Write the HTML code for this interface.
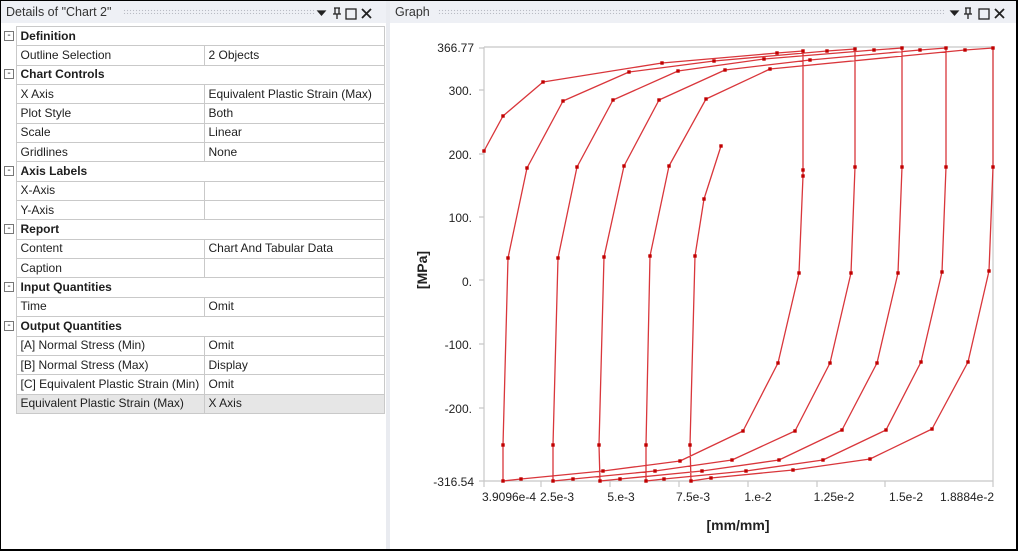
<!DOCTYPE html>
<html><head><meta charset="utf-8"><style>
*{margin:0;padding:0;box-sizing:border-box}
body{width:1018px;height:551px;background:#000;overflow:hidden;font-family:"Liberation Sans",Arial,sans-serif;font-size:12px;color:#1e1e1e;position:relative}
.wrap{position:absolute;left:1px;top:1px;width:1015px;height:548px;background:#e9ebf0}
.left{position:absolute;left:0;top:0;width:385px;height:548px;background:#fff}
.tbar{position:absolute;top:0;height:22px;background:#eef0f5;}
.tbar .t{position:absolute;left:5px;top:4px;font-size:12.5px;color:#333}
.tbar .dots{position:absolute;top:8px;height:5px;background-image:radial-gradient(#b9bcc4 0.7px,transparent 0.8px);background-size:3px 3px}
table{position:absolute;left:0;top:25px;border-collapse:collapse;width:384px}
td{height:19.35px;border:1px solid #c9c9c9;padding:0 0 0 4px;font-size:12px;white-space:nowrap;line-height:17px}
td.m{width:15px;border:none;border-right:1px solid #c9c9c9;padding:0;background:#fff;position:relative}
td.m span{position:absolute;left:3px;top:4px;width:10px;height:10px;border:1px solid #777;font-size:10px;line-height:7px;text-align:center;color:#333}
td.h{font-weight:bold}
td.n{width:188px}
td.sel{background:#e6e6e6}
.right{position:absolute;left:389px;top:0;width:626px;height:548px;background:#fff}
</style></head><body><div class="wrap">
<div class="left">
<div class="tbar" style="left:0;width:385px"><span class="t">Details of "Chart 2"</span><div class="dots" style="left:122px;width:192px"></div></div>
<table>
<tr><td class="m"><span>-</span></td><td class="h" colspan="2">Definition</td></tr>
<tr><td class="m"></td><td class="n">Outline Selection</td><td>2 Objects</td></tr>
<tr><td class="m"><span>-</span></td><td class="h" colspan="2">Chart Controls</td></tr>
<tr><td class="m"></td><td class="n">X Axis</td><td>Equivalent Plastic Strain (Max)</td></tr>
<tr><td class="m"></td><td class="n">Plot Style</td><td>Both</td></tr>
<tr><td class="m"></td><td class="n">Scale</td><td>Linear</td></tr>
<tr><td class="m"></td><td class="n">Gridlines</td><td>None</td></tr>
<tr><td class="m"><span>-</span></td><td class="h" colspan="2">Axis Labels</td></tr>
<tr><td class="m"></td><td class="n">X-Axis</td><td></td></tr>
<tr><td class="m"></td><td class="n">Y-Axis</td><td></td></tr>
<tr><td class="m"><span>-</span></td><td class="h" colspan="2">Report</td></tr>
<tr><td class="m"></td><td class="n">Content</td><td>Chart And Tabular Data</td></tr>
<tr><td class="m"></td><td class="n">Caption</td><td></td></tr>
<tr><td class="m"><span>-</span></td><td class="h" colspan="2">Input Quantities</td></tr>
<tr><td class="m"></td><td class="n">Time</td><td>Omit</td></tr>
<tr><td class="m"><span>-</span></td><td class="h" colspan="2">Output Quantities</td></tr>
<tr><td class="m"></td><td class="n">[A] Normal Stress (Min)</td><td>Omit</td></tr>
<tr><td class="m"></td><td class="n">[B] Normal Stress (Max)</td><td>Display</td></tr>
<tr><td class="m"></td><td class="n">[C] Equivalent Plastic Strain (Min)</td><td>Omit</td></tr>
<tr><td class="m"></td><td class="n sel">Equivalent Plastic Strain (Max)</td><td class="sel">X Axis</td></tr>
</table>
</div>
<div class="right">
<div class="tbar" style="left:0;width:626px"><span class="t">Graph</span><div class="dots" style="left:48px;width:506px"></div></div>
</div>
</div>
<svg width="1018" height="551" style="position:absolute;left:0;top:0" font-family="Liberation Sans, Arial, sans-serif">
<defs>
<marker id="mk" markerUnits="userSpaceOnUse" markerWidth="4" markerHeight="4" refX="2" refY="2" viewBox="0 0 4 4"><rect x="0.3" y="0.3" width="3.4" height="3.4" fill="#c00000"/></marker>
</defs>
<g stroke="#222" fill="none" stroke-width="1.3">
<path d="M318 11l7 0l-3.5 4z" fill="#222"/>
<path d="M334 8h6M335 8v6h4v-6M337 14v5M333 14h8"/>
<rect x="346" y="9" width="10" height="10"/>
<path d="M362 9l9 9M371 9l-9 9" stroke-width="1.8"/>
<path d="M951 11l7 0l-3.5 4z" fill="#222"/>
<path d="M965 8h6M966 8v6h4v-6M968 14v5M964 14h8"/>
<rect x="979" y="9" width="10" height="10"/>
<path d="M995 9l9 9M1004 9l-9 9" stroke-width="1.8"/>
</g>
<g stroke="#c8c8c8" stroke-width="1.2" fill="none">
<path d="M484 47H993V481M484 47V481H993"/>
<path d="M479 48h5M479 90h5M479 154h5M479 217h5M479 280h5M479 344h5M479 408h5M479 481h5"/>
<path d="M484 481v6M541 481v6M610 481v6M679 481v6M748 481v6M817 481v6M885 481v6M993 481v6"/>
</g>
<g font-size="12" fill="#222" text-anchor="end">
<text x="474" y="52">366.77</text><text x="472" y="95">300.</text><text x="472" y="159">200.</text>
<text x="472" y="222">100.</text><text x="472" y="286">0.</text><text x="472" y="349">-100.</text>
<text x="472" y="413">-200.</text><text x="474" y="486">-316.54</text>
</g>
<g font-size="12" fill="#222" text-anchor="middle">
<text x="509" y="501">3.9096e-4</text><text x="557" y="501">2.5e-3</text><text x="621" y="501">5.e-3</text>
<text x="693" y="501">7.5e-3</text><text x="758" y="501">1.e-2</text><text x="834" y="501">1.25e-2</text>
<text x="906" y="501">1.5e-2</text><text x="967" y="501">1.8884e-2</text>
<text x="738" y="530" font-weight="bold" font-size="14">[mm/mm]</text>
<text transform="translate(427,270) rotate(-90)" font-weight="bold" font-size="14">[MPa]</text>
</g>
<polyline fill="none" stroke="#d9363b" stroke-width="1.3" stroke-linejoin="round" marker-start="url(#mk)" marker-mid="url(#mk)" marker-end="url(#mk)" points="
484,151 503,116 543,82 662,63 777,53 803,51
803,170 803,176 799,273 778,363 743,431 680,461 603,471 521,479 503,481
503,445 508,258 527,168 563,101 629,72 714,61 827,51 855,49
855,167 851,273 830,363 795,431 732,460 655,471 573,479 553,481
553,445 558,258 577,167 613,100 678,71 764,59 874,50 902,48
902,167 898,273 877,363 842,430 779,460 702,471 620,479 600,481
599,445 604,257 624,166 659,100 725,70 810,60 920,50 946,48
946,167 942,272 921,362 886,430 823,460 746,471 664,479 646,481
646,445 650,256 669,166 706,99 770,69 965,50 993,48
993,167 989,271 968,362 932,429 870,459 793,470 711,478 691,481
690,445 695,256 704,199 721,146"/>
</svg>
</body></html>
